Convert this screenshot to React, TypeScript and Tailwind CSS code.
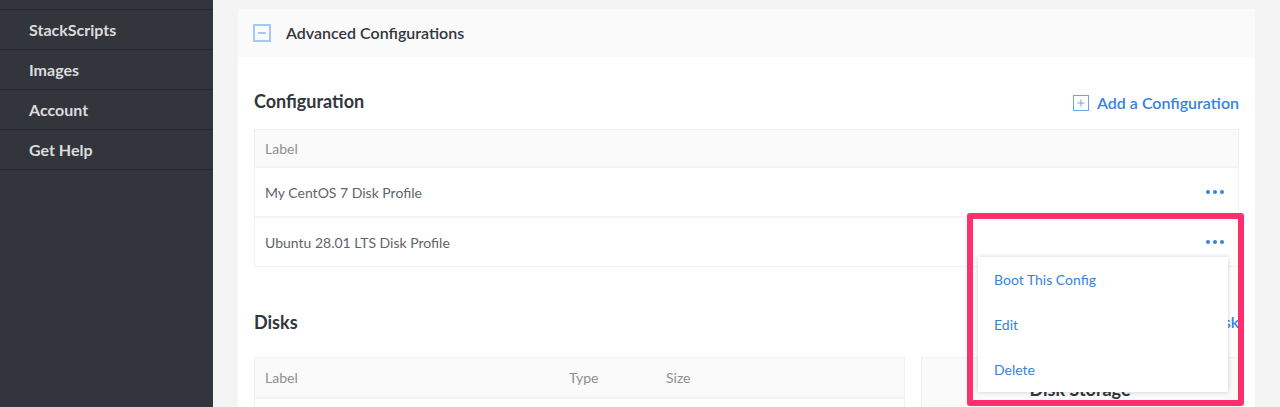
import React from "react";

const navItems = ["StackScripts", "Images", "Account", "Get Help"];

function Dots() {
  return (
    <div className="flex items-center gap-[3px]">
      <span className="h-[4px] w-[4px] rounded-full bg-[#3683dc]" />
      <span className="h-[4px] w-[4px] rounded-full bg-[#3683dc]" />
      <span className="h-[4px] w-[4px] rounded-full bg-[#3683dc]" />
    </div>
  );
}

function PlusBox() {
  return (
    <svg width="16" height="16" viewBox="0 0 16 16" className="shrink-0">
      <rect x="0.5" y="0.5" width="15" height="15" fill="none" stroke="#6ea4e6" strokeWidth="1" />
      <path d="M8 4.5v7M4.5 8h7" stroke="#6ea4e6" strokeWidth="1" />
    </svg>
  );
}

function MinusBox() {
  return (
    <svg width="18" height="18" viewBox="0 0 18 18" className="shrink-0">
      <rect x="1" y="1" width="16" height="16" fill="none" stroke="#a6c9f4" strokeWidth="2" />
      <path d="M5 9h8" stroke="#a6c9f4" strokeWidth="2" />
    </svg>
  );
}

export default function App() {
  return (
    <div className="relative flex h-[407px] w-[1280px] overflow-hidden bg-[#f4f4f4] font-[Lato,sans-serif]">
      <aside className="w-[213px] shrink-0 bg-[#32363c]">
        <div className="h-[10px] border-b border-[#27292e]" />
        {navItems.map((item) => (
          <div
            key={item}
            className="flex h-[40px] items-center border-b border-[#27292e] pl-[29px] text-[16px] font-bold text-[#dcdcdc]"
          >
            {item}
          </div>
        ))}
      </aside>

      <main className="flex-1 px-[25px] pt-[9px]">
        <section className="bg-white">
          <div className="flex h-[48px] items-center gap-[15px] bg-[#fafafa] pl-[15px]">
            <MinusBox />
            <span className="text-[16px] font-semibold text-[#32363c]">Advanced Configurations</span>
          </div>

          <div className="px-[16px]">
            <div className="mt-[32px] flex h-[24px] items-center justify-between">
              <h2 className="text-[18px] font-bold text-[#32363c]">Configuration</h2>
              <button className="mt-[4px] flex items-center gap-[8px] text-[16px] font-semibold text-[#3683dc]">
                <PlusBox />
                Add a Configuration
              </button>
            </div>

            <div className="mt-[16px] border border-[#f0f0f0]">
              <div className="flex h-[36px] items-center bg-[#fafafa] px-[10px] text-[14px] text-[#8c9094]">
                Label
              </div>
              <div className="flex h-[50px] items-center justify-between border-t-2 border-[#f4f4f4] pl-[10px] pr-[14px] text-[14px] text-[#606469]">
                <span>My CentOS 7 Disk Profile</span>
                <Dots />
              </div>
              <div className="flex h-[50px] items-center justify-between border-t-2 border-[#f4f4f4] pl-[10px] pr-[14px] text-[14px] text-[#606469]">
                <span>Ubuntu 28.01 LTS Disk Profile</span>
                <Dots />
              </div>
            </div>

            <div className="mt-[43px] flex h-[24px] items-center justify-between">
              <h2 className="text-[18px] font-bold text-[#32363c]">Disks</h2>
              <button className="flex items-center gap-[8px] text-[16px] font-semibold text-[#3683dc]">
                <PlusBox />
                Add a Disk
              </button>
            </div>

            <div className="mt-[23px] flex gap-[16px]">
              <div className="flex-1 border border-[#f0f0f0]">
                <div className="flex h-[39px] items-center bg-[#fafafa] px-[10px] text-[14px] text-[#8c9094]">
                  <span className="w-[304px]">Label</span>
                  <span className="w-[97px]">Type</span>
                  <span>Size</span>
                </div>
                <div className="h-[50px] border-t-2 border-[#f4f4f4]" />
              </div>
              <div className="w-[318px] border border-[#f0f0f0] bg-[#fafafa] pt-[18px] text-center">
                <h3 className="text-[18px] font-bold text-[#32363c]">Disk Storage</h3>
              </div>
            </div>
          </div>
        </section>
      </main>

      <div className="absolute left-[978px] top-[257px] w-[250px] bg-white shadow-[0_0_5px_rgba(0,0,0,0.18)]">
        {["Boot This Config", "Edit", "Delete"].map((label) => (
          <div key={label} className="flex h-[45px] items-center px-[16px] text-[14px] text-[#3683dc]">
            {label}
          </div>
        ))}
      </div>

      <div className="pointer-events-none absolute left-[967px] top-[213px] h-[193px] w-[277px] rounded-[3px] border-[6px] border-[#ff2f6e]" />
    </div>
  );
}
